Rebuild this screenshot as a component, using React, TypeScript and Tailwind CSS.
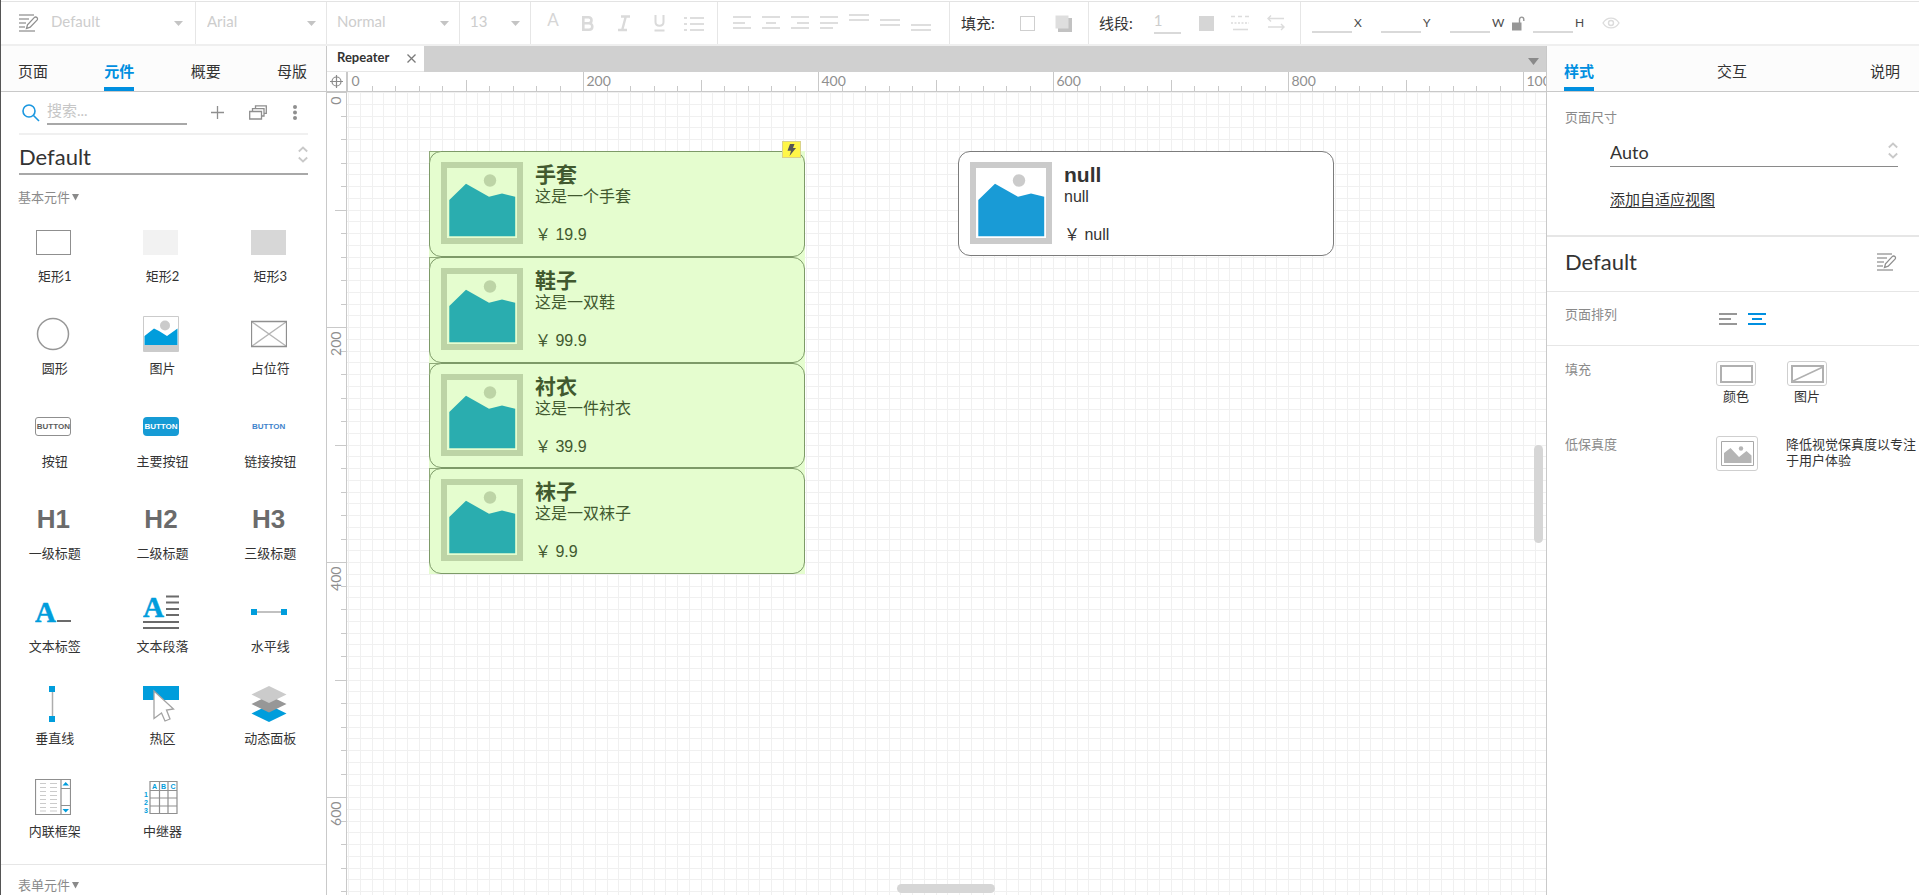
import React, { useEffect, useRef, useState } from "react";
import type { ReactNode } from "react";

const UNIT = 11.75;
const steps = (count: number) => Array.from({ length: Math.max(0, count) }, (_, i) => i);
const at = (i: number) => Math.round(i * UNIT) + 0.5;

/* ---------- small icons ---------- */

function StyleIcon() {
  return (
    <svg width="20" height="18" viewBox="0 0 20 18" fill="none" stroke="#a3a3a3" strokeWidth="1.3">
      <path d="M0 1H15M0 5H10M0 9H7M0 13H6M0 17H16" />
      <path d="M7.5 14.5L8.5 10.8L15.2 3.6C16 2.8 17.2 2.8 17.9 3.5C18.7 4.2 18.7 5.3 18 6.1L11.2 13.2Z" stroke="#8f8f8f" />
    </svg>
  );
}

function Caret() {
  return (
    <svg width="9" height="5" viewBox="0 0 9 5" className="pointer-events-none -ml-5 shrink-0">
      <path d="M0 0H9L4.500 5Z" fill="#c4c4c4" />
    </svg>
  );
}

function UpDown() {
  return (
    <svg width="10" height="17" viewBox="0 0 10 17" fill="none" stroke="#c9c9c9" strokeWidth="1.8" className="pointer-events-none -ml-2.5 shrink-0">
      <path d="M0.800 5.500L5 1.500L9.200 5.500M0.800 11.500L5 15.500L9.200 11.500" />
    </svg>
  );
}

function Bars({ d, width = 18, height = 18, color = "#dedede" }: { d: string; width?: number; height?: number; color?: string }) {
  return (
    <svg width={width} height={height} viewBox={`0 0 ${width} ${height}`} stroke={color} strokeWidth="2" fill="none" className="shrink-0">
      <path d={d} />
    </svg>
  );
}

function ToolButton({ label, children }: { label: string; children: ReactNode }) {
  return (
    <button type="button" aria-label={label} className="flex shrink-0 items-center justify-center">
      {children}
    </button>
  );
}

function ToolSelect({ label, value, className }: { label: string; value: string; className: string }) {
  return (
    <div className={"flex items-center border-r border-[#e6e6e6] " + className}>
      <select aria-label={label} className="min-w-0 flex-1 appearance-none bg-transparent pb-1 text-[15px] leading-5 text-[#cdcdcd] outline-none">
        <option>{value}</option>
      </select>
      <Caret />
    </div>
  );
}

function Coord({ name }: { name: string }) {
  return (
    <label className="flex h-full items-center gap-0.5 text-[12px] text-[#4a4a4a]">
      <input aria-label={name} className="h-5 w-[40px] border-b-2 border-[#d9d9d9] bg-transparent outline-none" />
      <span className="w-3">{name}</span>
    </label>
  );
}

function Toolbar() {
  return (
    <header className="border-b-2 border-[#efefef] pt-px">
      <div className="flex h-[43px] border-t border-[#e3e3e3] bg-white">
        <div className="flex w-[195px] shrink-0 items-center border-r border-[#e6e6e6] pl-[18px] pr-3">
          <ToolButton label="样式管理">
            <StyleIcon />
          </ToolButton>
          <select aria-label="样式" className="ml-3 min-w-0 flex-1 appearance-none bg-transparent pb-1 text-[15px] leading-5 text-[#cdcdcd] outline-none">
            <option>Default</option>
          </select>
          <Caret />
        </div>
        <ToolSelect label="字体" value="Arial" className="w-[131px] shrink-0 pl-[11px] pr-2.5" />
        <ToolSelect label="字重" value="Normal" className="w-[133px] shrink-0 pl-2.5 pr-2.5" />
        <ToolSelect label="字号" value="13" className="w-[71px] shrink-0 pl-2.5 pr-2.5" />

        <div className="flex w-[187px] shrink-0 items-center justify-between border-r border-[#e6e6e6] pl-3 pr-[13px]">
          <ToolButton label="文字颜色">
            <span className="w-5 pb-1.5 text-center text-[17px] leading-5 text-[#d6d6d6]">A</span>
          </ToolButton>
          <ToolButton label="粗体">
            <svg width="20" height="18" viewBox="0 0 20 18" fill="none" stroke="#dadada" strokeWidth="2.6">
              <path d="M5.300 3.300H10.500C14.500 3.300 14.500 9.300 10.500 9.300H5.300M5.300 9.300H11C15.400 9.300 15.400 15.700 11 15.700H5.300ZM5.300 2V17" />
            </svg>
          </ToolButton>
          <ToolButton label="斜体">
            <svg width="20" height="18" viewBox="0 0 20 18" fill="none" stroke="#dadada" strokeWidth="2.4">
              <path d="M7 2.500H16M4 16H13M11.800 2.500L8.200 16" />
            </svg>
          </ToolButton>
          <ToolButton label="下划线">
            <svg width="20" height="18" viewBox="0 0 20 18" fill="none" stroke="#dadada" strokeWidth="2">
              <path d="M6.500 1V8C6.500 13 14.500 13 14.500 8V1M5.500 16.500H15.500" />
            </svg>
          </ToolButton>
          <ToolButton label="项目符号">
            <Bars width={20} d="M0 4H3M6 4H20M0 10H3M6 10H20M0 16H3M6 16H20" />
          </ToolButton>
        </div>

        <div className="flex w-[232px] shrink-0 items-center justify-between border-r border-[#e6e6e6] pl-[15px] pr-[18px]">
          <ToolButton label="左对齐"><Bars d="M0 3H18M0 9H12M0 14H18" /></ToolButton>
          <ToolButton label="居中对齐"><Bars d="M0 3H18M4 9H14M0 14H18" /></ToolButton>
          <ToolButton label="右对齐"><Bars d="M0 3H18M6 9H18M0 14H18" /></ToolButton>
          <ToolButton label="两端对齐"><Bars d="M0 3H18M0 9H18M0 14H13" /></ToolButton>
          <ToolButton label="顶部对齐"><Bars width={20} d="M0 1H20M0 6H20" /></ToolButton>
          <ToolButton label="垂直居中"><Bars width={20} d="M0 6H20M0 11H20" /></ToolButton>
          <ToolButton label="底部对齐"><Bars width={20} d="M0 11H20M0 16H20" /></ToolButton>
        </div>

        <div className="flex w-[139px] shrink-0 items-center justify-between border-r border-[#e6e6e6] pl-[11px] pr-4">
          <span className="w-[39px] whitespace-nowrap text-[15px] text-[#333]">填充:</span>
          <ToolButton label="填充颜色"><span className="size-[15px] border border-[#cfcfcf]" /></ToolButton>
          <ToolButton label="阴影">
            <svg width="17" height="17" viewBox="0 0 17 17">
              <path d="M3 3H17V17H3Z" fill="#c2c2c2" />
              <path d="M0.500 0.500H13.500V13.500H0.500Z" fill="#dedede" />
            </svg>
          </ToolButton>
        </div>

        <div className="flex w-[212px] shrink-0 items-center justify-between border-r border-[#e6e6e6] pl-2.5 pr-[15px]">
          <label htmlFor="line-width" className="w-[37px] whitespace-nowrap text-[15px] text-[#333]">线段:</label>
          <input id="line-width" defaultValue="1" className="h-[22px] w-[27px] border-b-2 border-[#d9d9d9] bg-transparent pb-1 text-[15px] text-[#cdcdcd] outline-none" />
          <ToolButton label="线段颜色"><span className="size-[15px] bg-[#d6d6d6]" /></ToolButton>
          <ToolButton label="线段类型">
            <svg width="18" height="16" viewBox="0 0 18 16" stroke="#dcdcdc" strokeWidth="1.600" fill="none">
              <path d="M0 1.500H18" strokeDasharray="4 3" />
              <path d="M0 8H18" strokeDasharray="2 1.500" />
              <path d="M2 14.500H17" />
            </svg>
          </ToolButton>
          <ToolButton label="箭头样式">
            <svg width="18" height="16" viewBox="0 0 18 16" stroke="#dcdcdc" strokeWidth="1.400" fill="none">
              <path d="M17 3.500H1M4 0.500L1 3.500L4 6.500M1 12H17M14 9L17 12L14 15" />
            </svg>
          </ToolButton>
        </div>

        <div className="flex flex-1 items-center gap-[15px] pl-[11px]">
          <Coord name="X" />
          <Coord name="Y" />
          <div className="flex h-full items-center gap-2">
            <Coord name="W" />
            <ToolButton label="锁定宽高比">
              <svg width="13" height="15" viewBox="0 0 13 15">
                <path d="M0 6.500H9.500V14.500H0Z" fill="#979797" />
                <path d="M7.500 7V3.500C7.500 0.300 11.800 0.300 11.800 3.500V5" fill="none" stroke="#979797" strokeWidth="1.400" />
              </svg>
            </ToolButton>
            <Coord name="H" />
          </div>
          <ToolButton label="可见性">
            <svg width="18" height="12" viewBox="0 0 18 12" fill="none" stroke="#dcdcdc" strokeWidth="1.400">
              <path d="M1 6C5-0.500 13-0.500 17 6C13 12.500 5 12.500 1 6Z" />
              <circle cx="9" cy="6" r="2.500" />
            </svg>
          </ToolButton>
        </div>
      </div>
    </header>
  );
}

function PanelTabs({ items, active }: { items: string[]; active: number }) {
  return (
    <nav className="flex h-[46px] shrink-0 justify-between border-b border-[#c9c9c9] bg-[#fcfcfc] pr-[19px] pl-[17px]">
      {items.map((t, i) => (
        <button
          key={t}
          type="button"
          className={
            i === active
              ? "border-b-4 border-[#008fe0] pt-2.5 text-[15px] font-bold text-[#008fe0]"
              : "border-b-4 border-transparent pt-2.5 text-[15px] text-[#333]"
          }
        >
          {t}
        </button>
      ))}
    </nav>
  );
}

/* ---------- widget library drawings ---------- */

const headingClass = "text-[26px] leading-9 font-bold text-[#6b6b6b] font-['Liberation_Sans',sans-serif]";
const tinyClass = "font-['Liberation_Sans',sans-serif] text-[8px] leading-3 font-bold";

function Svg({ children }: { children: ReactNode }) {
  return (
    <svg width="36" height="36" viewBox="0 0 36 36" fill="none">
      {children}
    </svg>
  );
}

const widgets: { name: string; icon: ReactNode }[] = [
  { name: "矩形1", icon: <span className="h-[25px] w-[35px] border border-[#8f8f8f]" /> },
  { name: "矩形2", icon: <span className="h-[25px] w-[35px] bg-[#f2f2f2]" /> },
  { name: "矩形3", icon: <span className="h-[25px] w-[35px] bg-[#d7d7d7]" /> },
  {
    name: "圆形",
    icon: (
      <Svg>
        <circle cx="18" cy="18" r="15.500" stroke="#979797" strokeWidth="1.500" />
      </Svg>
    ),
  },
  {
    name: "图片",
    icon: (
      <Svg>
        <path d="M0.500 0.500H35.500V35.500H0.500Z" stroke="#cbcbcb" fill="#fff" />
        <path d="M1 29H35V35H1Z" fill="#cbcbcb" />
        <circle cx="22" cy="9.500" r="5" fill="#cbcbcb" />
        <path d="M1.500 20L11 12.500L16 15L24 20L34.500 12.500V29H1.500Z" fill="#009ddc" />
      </Svg>
    ),
  },
  {
    name: "占位符",
    icon: (
      <Svg>
        <path d="M1 6L35 30M35 6L1 30" stroke="#b5b5b5" strokeWidth="1.300" />
        <path d="M0.500 5.500H35.500V30.500H0.500Z" stroke="#8f8f8f" strokeWidth="1.300" />
      </Svg>
    ),
  },
  {
    name: "按钮",
    icon: <span className={"flex h-[19px] w-9 items-center justify-center rounded-[3px] border border-[#8f8f8f] text-[#5c5c5c] " + tinyClass}>BUTTON</span>,
  },
  {
    name: "主要按钮",
    icon: <span className={"flex h-[19px] w-9 items-center justify-center rounded-[4px] bg-[#169bd5] text-white " + tinyClass}>BUTTON</span>,
  },
  { name: "链接按钮", icon: <span className={"text-[#3e83cc] " + tinyClass}>BUTTON</span> },
  { name: "一级标题", icon: <span className={headingClass}>H1</span> },
  { name: "二级标题", icon: <span className={headingClass}>H2</span> },
  { name: "三级标题", icon: <span className={headingClass}>H3</span> },
  {
    name: "文本标签",
    icon: (
      <Svg>
        <text x="0" y="28" fontFamily="Liberation Serif, serif" fontWeight="700" fontSize="29" fill="#009ddc" stroke="#009ddc" strokeWidth="0.500">A</text>
        <path d="M22 27H36" stroke="#6b6b6b" strokeWidth="2" />
      </Svg>
    ),
  },
  {
    name: "文本段落",
    icon: (
      <Svg>
        <text x="0" y="23" fontFamily="Liberation Serif, serif" fontWeight="700" fontSize="29" fill="#009ddc" stroke="#009ddc" strokeWidth="0.500">A</text>
        <path d="M23 2.500H36M23 8.500H36M23 15H36M23 21H36M0 28H36M0 34H36" stroke="#6b6b6b" strokeWidth="2" />
      </Svg>
    ),
  },
  {
    name: "水平线",
    icon: (
      <Svg>
        <path d="M3 18H33" stroke="#adadad" strokeWidth="1.500" />
        <path d="M0 15H6V21H0ZM30 15H36V21H30Z" fill="#009ddc" />
      </Svg>
    ),
  },
  {
    name: "垂直线",
    icon: (
      <Svg>
        <path d="M17.500 3V33" stroke="#adadad" strokeWidth="1.500" />
        <path d="M14 0H20V6H14ZM14 30H20V36H14Z" fill="#009ddc" />
      </Svg>
    ),
  },
  {
    name: "热区",
    icon: (
      <Svg>
        <path d="M0 0H36V14H0Z" fill="#009ddc" />
        <path d="M11 5L30.500 23L23.500 24L27 33L22 35L18.500 27L11 32.500Z" fill="#fff" stroke="#a3a3a3" strokeWidth="1.300" />
      </Svg>
    ),
  },
  {
    name: "动态面板",
    icon: (
      <Svg>
        <path d="M0.500 27.500L18 19L35.500 27.500L18 36Z" fill="#009ddc" />
        <path d="M0.500 18L18 9.500L35.500 18L18 26.500Z" fill="#979797" />
        <path d="M0.500 8.500L18 0L35.500 8.500L18 17Z" fill="#cbcbcb" />
      </Svg>
    ),
  },
  {
    name: "内联框架",
    icon: (
      <Svg>
        <path d="M0.500 0.500H35.500V35.500H0.500ZM26 0V36M26 9.500H35.500M26 26.500H35.500" stroke="#8f8f8f" strokeWidth="1.200" />
        <path d="M5 4.500H11M15 4.500H22M5 8.500H11M15 8.500H22M5 12.500H11M15 12.500H22M5 16.500H11M15 16.500H22M5 20.500H11M15 20.500H22M5 24.500H11M15 24.500H22M5 28.500H11M15 28.500H22M5 32H11M15 32H22" stroke="#cbcbcb" strokeWidth="1.200" />
        <path d="M27.500 6.500L30.700 3L34 6.500ZM27.500 30L30.700 33.500L34 30Z" fill="#009ddc" />
      </Svg>
    ),
  },
  {
    name: "中继器",
    icon: (
      <Svg>
        <path d="M7 2.500H34V34.500H7ZM7 11.500H34M7 19H34M7 27H34M16.500 2.500V34.500M25 2.500V34.500" stroke="#8f8f8f" strokeWidth="1.200" />
        <g fontFamily="Liberation Sans, sans-serif" fontWeight="700" fontSize="7" fill="#009ddc">
          <text x="9" y="9.500">A</text>
          <text x="18" y="9.500">B</text>
          <text x="27.500" y="9.500">C</text>
          <text x="1" y="18">1</text>
          <text x="1" y="25.500">2</text>
          <text x="1" y="33.500">3</text>
        </g>
      </Svg>
    ),
  },
];

function SectionTitle({ children }: { children: ReactNode }) {
  return (
    <button type="button" className="flex items-center gap-0.5 pl-[17px] text-[13px] leading-5 text-[#8a8a8a]">
      {children}
      <svg width="7" height="7" viewBox="0 0 7 7">
        <path d="M0 0H7L3.500 6.500Z" fill="#8a8a8a" />
      </svg>
    </button>
  );
}

function LibraryPanel() {
  return (
    <aside className="flex w-[326px] shrink-0 flex-col border-r border-[#c9c9c9]">
      <PanelTabs items={["页面", "元件", "概要", "母版"]} active={1} />
      <div className="mx-[18px] flex h-[43px] shrink-0 items-center border-b-2 border-[#f0f0f0] pl-[3px]">
        <svg width="18" height="18" viewBox="0 0 18 18" fill="none" stroke="#1b97e0" strokeWidth="1.600">
          <circle cx="7" cy="7" r="6" />
          <path d="M11.500 11.500L17 17" />
        </svg>
        <input aria-label="搜索" placeholder="搜索..." className="ml-[7px] h-6 w-[140px] border-b-2 border-[#a8a8a8] bg-transparent pb-1 text-[15px] text-[#333] outline-none placeholder:text-[#c6c6c6]" />
        <div className="ml-auto flex items-center gap-[25px] pr-2.5">
          <ToolButton label="添加元件库">
            <svg width="13" height="13" viewBox="0 0 13 13" stroke="#8f8f8f" strokeWidth="1.300"><path d="M6.500 0V13M0 6.500H13" /></svg>
          </ToolButton>
          <ToolButton label="元件库">
            <svg width="18" height="15" viewBox="0 0 18 15" fill="none" stroke="#8f8f8f" strokeWidth="1.300">
              <path d="M0.700 6.500H12.500V14H0.700ZM3.500 6.500V3.700H15V11H12.500M6.500 3.700V0.900H17.300V8.300H15" />
            </svg>
          </ToolButton>
          <ToolButton label="更多">
            <svg width="6" height="15" viewBox="0 0 6 15" fill="#8f8f8f"><circle cx="3" cy="2" r="2" /><circle cx="3" cy="7.500" r="2" /><circle cx="3" cy="13" r="2" /></svg>
          </ToolButton>
        </div>
      </div>
      <div className="mx-[18px] flex h-10 shrink-0 items-center border-b-2 border-[#a8a8a8]">
        <select aria-label="元件库选择" className="min-w-0 flex-1 appearance-none bg-transparent pt-1.5 text-[22px] leading-8 text-[#333] outline-none">
          <option>Default</option>
        </select>
        <UpDown />
      </div>
      <div className="pt-3">
        <SectionTitle>基本元件</SectionTitle>
      </div>
      <ul className="mr-0.5 grid h-[647px] shrink-0 grid-cols-3 grid-rows-7">
        {widgets.map((w) => (
          <li key={w.name} className="flex flex-col items-center pt-[17px]">
            <span className="mr-[3px] flex h-9 items-center justify-center">{w.icon}</span>
            <span className="pt-1.5 text-[13px] leading-5 text-[#333]">{w.name}</span>
          </li>
        ))}
      </ul>
      <div className="mt-2.5 border-t border-[#e6e6e6] pt-2.5">
        <SectionTitle>表单元件</SectionTitle>
      </div>
    </aside>
  );
}

/* ---------- canvas ---------- */

function useSize() {
  const ref = useRef<HTMLDivElement>(null);
  const [size, setSize] = useState({ width: 1200, height: 803 });
  useEffect(() => {
    const el = ref.current;
    if (!el) return;
    const observer = new ResizeObserver(() => setSize({ width: el.clientWidth, height: el.clientHeight }));
    observer.observe(el);
    return () => observer.disconnect();
  }, []);
  return { ref, ...size };
}

function TopRuler({ length }: { length: number }) {
  return (
    <svg className="h-full w-full" fontSize="14" fill="#8f8f8f" stroke="none">
      {steps(Math.ceil(length / UNIT / 2)).map((i) => (
        <path key={i} d={`M${at(i * 2) + (i === 0 ? 0 : 1)} ${i % 10 === 0 ? 0 : i % 5 === 0 ? 8 : 14}V20`} stroke="#c9c9c9" />
      ))}
      {steps(Math.ceil(length / UNIT / 20)).map((i) => (
        <text key={i} x={at(i * 20) + 4} y="14">{i * 200}</text>
      ))}
    </svg>
  );
}

function SideRuler({ length }: { length: number }) {
  return (
    <svg className="h-full w-full" fontSize="14" fill="#8f8f8f" stroke="none">
      {steps(Math.ceil(length / UNIT / 2)).map((i) => (
        <path key={i} d={`M${i % 10 === 0 ? 0 : i % 5 === 0 ? 8 : 14} ${at(i * 2)}H20`} stroke="#c9c9c9" />
      ))}
      {steps(Math.ceil(length / UNIT / 20)).map((i) => (
        <text key={i} textAnchor="end" transform={`translate(14 ${at(i * 20) + 4}) rotate(-90)`}>{i * 200}</text>
      ))}
    </svg>
  );
}

function Picture({ tinted }: { tinted: boolean }) {
  const frame = tinted ? "#bdd4a6" : "#cbcbcb";
  return (
    <svg width="82" height="82" viewBox="0 0 82 82" className="shrink-0">
      <path d="M3 3H79V79H3Z" fill="none" stroke={frame} strokeWidth="6" />
      <circle cx="49" cy="18.500" r="6.200" fill={frame} />
      <path d="M8.300 38L25 21.700L48 34.800L61 31.400L74.200 34.800V74.300H8.300Z" fill={tinted ? "#2aadaf" : "#199bd6"} />
    </svg>
  );
}

function Item({ title, text, price, tinted = false }: { title: string; text: string; price: string; tinted?: boolean }) {
  return (
    <article
      className={
        tinted
          ? "flex flex-1 gap-3 rounded-xl border border-[#7d9a68] px-[11px] pt-2.5 text-[#41592f]"
          : "flex flex-1 gap-3 rounded-xl border border-[#7c7c7c] bg-white px-[11px] pt-2.5 text-[#333]"
      }
    >
      <Picture tinted={tinted} />
      <div className="font-['Liberation_Sans','Noto_Sans_CJK_SC',sans-serif]">
        <h3 className="text-[21px] leading-[25px] font-bold">{title}</h3>
        <p className="text-[16px] leading-5">{text}</p>
        <p className="pt-[18px] text-[16px] leading-5">￥ {price}</p>
      </div>
    </article>
  );
}

const goods = [
  { title: "手套", text: "这是一个手套", price: "19.9" },
  { title: "鞋子", text: "这是一双鞋", price: "99.9" },
  { title: "衬衣", text: "这是一件衬衣", price: "39.9" },
  { title: "袜子", text: "这是一双袜子", price: "9.9" },
];

function Canvas() {
  const { ref, width, height } = useSize();
  return (
    <main className="flex min-w-0 flex-1 flex-col">
      <div className="flex h-[26px] shrink-0 justify-between bg-[#d0d0d0]">
        <div className="flex items-center gap-[18px] border-b border-[#e6e6e6] bg-white pr-2 pl-2.5">
          <span className="pb-0.5 text-[13px] font-bold text-[#333]">Repeater</span>
          <ToolButton label="关闭">
            <svg width="9" height="9" viewBox="0 0 9 9" stroke="#7a7a7a" strokeWidth="1.300"><path d="M0.500 0.500L8.500 8.500M8.500 0.500L0.500 8.500" /></svg>
          </ToolButton>
        </div>
        <button type="button" aria-label="标签列表" className="pt-1 pr-[7px]">
          <svg width="11" height="7" viewBox="0 0 11 7"><path d="M0 0H11L5.500 7Z" fill="#8a8a8a" /></svg>
        </button>
      </div>
      <div className="flex h-5 shrink-0 border-b border-[#c9c9c9]">
        <div className="flex w-5 shrink-0 items-center justify-center border-r border-[#c9c9c9]">
          <svg width="13" height="13" viewBox="0 0 13 13" fill="none" stroke="#8a8a8a" strokeWidth="1.200">
            <circle cx="6.500" cy="6.500" r="4.500" />
            <path d="M6.500 0V13M0 6.500H13" />
          </svg>
        </div>
        <div className="min-w-0 flex-1 overflow-hidden"><TopRuler length={width} /></div>
      </div>
      <div className="flex min-h-0 flex-1">
        <div className="w-5 shrink-0 overflow-hidden border-r border-[#c9c9c9]"><SideRuler length={height} /></div>
        <div ref={ref} className="relative min-w-0 flex-1 overflow-hidden">
          <svg className="absolute inset-0 h-full w-full" stroke="#f0f0f0">
            {steps(Math.ceil(width / UNIT)).map((i) => <path key={"v" + i} d={`M${at(i) + 1} 0V${height}`} />)}
            {steps(Math.ceil(height / UNIT)).map((i) => <path key={"h" + i} d={`M0 ${at(i)}H${width}`} />)}
          </svg>
          <section className="absolute top-[59px] left-[82px] flex h-[423px] w-[376px] flex-col bg-[#e5fdcf]">
            {goods.map((g) => (
              <div key={g.title} className="relative flex flex-1">
                <span className="absolute top-0 left-0 size-3 border-t border-l border-[#8faa79]" />
                <Item {...g} tinted />
              </div>
            ))}
            <span className="absolute -top-2.5 right-1 flex h-[17px] w-[19px] items-center justify-center border border-[#d9d28a] bg-[#fff648]">
              <svg width="9" height="12" viewBox="0 0 9 12"><path d="M3 0H7.500L6 4H9L2.500 12L4 6.800H0.500Z" fill="#555" /></svg>
            </span>
          </section>
          <section className="absolute top-[59px] left-[611px] flex h-[105px] w-[376px]">
            <Item title="null" text="null" price="null" />
          </section>
          <span className="absolute top-[353px] right-[3px] h-[98px] w-[9px] rounded-full bg-[#d6d6d6]" />
          <span className="absolute bottom-0.5 left-[550px] h-[9px] w-[98px] rounded-full bg-[#d6d6d6]" />
        </div>
      </div>
    </main>
  );
}

/* ---------- style panel ---------- */

function StylePanel() {
  const label = "w-[150px] shrink-0 text-[13px] leading-5 text-[#8a8a8a]";
  const box = "flex items-center justify-center rounded-[3px] border border-[#cfcfcf]";
  return (
    <aside className="flex w-[373px] shrink-0 flex-col border-l border-[#c9c9c9]">
      <PanelTabs items={["样式", "交互", "说明"]} active={0} />
      <section className="border-b-2 border-[#e6e6e6] pt-[15px] pb-6 pl-[18px]">
        <h2 className="text-[13px] leading-5 text-[#8a8a8a]">页面尺寸</h2>
        <div className="mt-2 mr-[21px] ml-[45px] flex h-8 items-center border-b border-[#8a8a8a]">
          <select aria-label="页面尺寸" className="min-w-0 flex-1 appearance-none bg-transparent pt-0.5 text-[18px] leading-6 text-[#333] outline-none">
            <option>Auto</option>
          </select>
          <UpDown />
        </div>
        <a href="#adaptive" className="mt-5 ml-[45px] inline-block text-[15px] leading-6 text-[#333] underline underline-offset-2">添加自适应视图</a>
      </section>
      <section className="flex h-[55px] items-center justify-between border-b border-[#e6e6e6] pr-[22px] pb-1 pl-[18px]">
        <h2 className="text-[22px] leading-8 text-[#333]">Default</h2>
        <ToolButton label="编辑样式"><StyleIcon /></ToolButton>
      </section>
      <section className="flex h-[54px] border-b border-[#e6e6e6] pt-3 pl-[18px]">
        <h3 className={label}>页面排列</h3>
        <div className="ml-1 flex items-start gap-[11px] pt-2">
          <ToolButton label="左对齐"><Bars height={14} color="#979797" d="M0 2H18M0 7H12M0 12H18" /></ToolButton>
          <ToolButton label="居中"><Bars height={14} color="#008fe0" d="M0 2H18M4 7H14M0 12H18" /></ToolButton>
        </div>
      </section>
      <section className="flex pt-[15px] pl-[18px]">
        <h3 className={label + " -mt-0.5"}>填充</h3>
        <div className="ml-px flex gap-[31px] text-[13px] leading-5 text-[#333]">
          <button type="button" className="flex w-10 flex-col items-center">
            <span className={"h-[25px] w-10 " + box}><span className="h-[18px] w-[33px] border-2 border-[#b0b0b0]" /></span>
            颜色
          </button>
          <button type="button" className="flex w-10 flex-col items-center">
            <span className={"h-[25px] w-10 " + box}>
              <svg width="33" height="18" viewBox="0 0 33 18" fill="none" stroke="#b0b0b0" strokeWidth="2"><path d="M1 1H32V17H1Z" /><path d="M1 16.500L32 2" strokeWidth="1.500" /></svg>
            </span>
            图片
          </button>
        </div>
      </section>
      <section className="flex pt-[30px] pl-[18px]">
        <h3 className={label + " -mt-0.5"}>低保真度</h3>
        <button type="button" aria-label="低保真度" className={"ml-px h-[35px] w-[42px] shrink-0 " + box}>
          <svg width="33" height="25" viewBox="0 0 33 25">
            <path d="M0.500 0.500H32.500V24.500H0.500Z" fill="none" stroke="#a8a8a8" />
            <circle cx="20" cy="7.500" r="2.200" fill="#b5b5b5" />
            <path d="M3 12L9.500 7L18 16L25.500 10L30.500 14.500V22H3Z" fill="#b5b5b5" />
          </svg>
        </button>
        <p className="ml-7 text-[13px] leading-4 text-[#333]">降低视觉保真度以专注于用户体验</p>
      </section>
    </aside>
  );
}

export default function App() {
  return (
    <div className="flex h-screen flex-col overflow-hidden border-l border-[#555] bg-white font-[Lato,'Noto_Sans_CJK_SC',sans-serif]">
      <Toolbar />
      <div className="flex min-h-0 flex-1">
        <LibraryPanel />
        <Canvas />
        <StylePanel />
      </div>
    </div>
  );
}
